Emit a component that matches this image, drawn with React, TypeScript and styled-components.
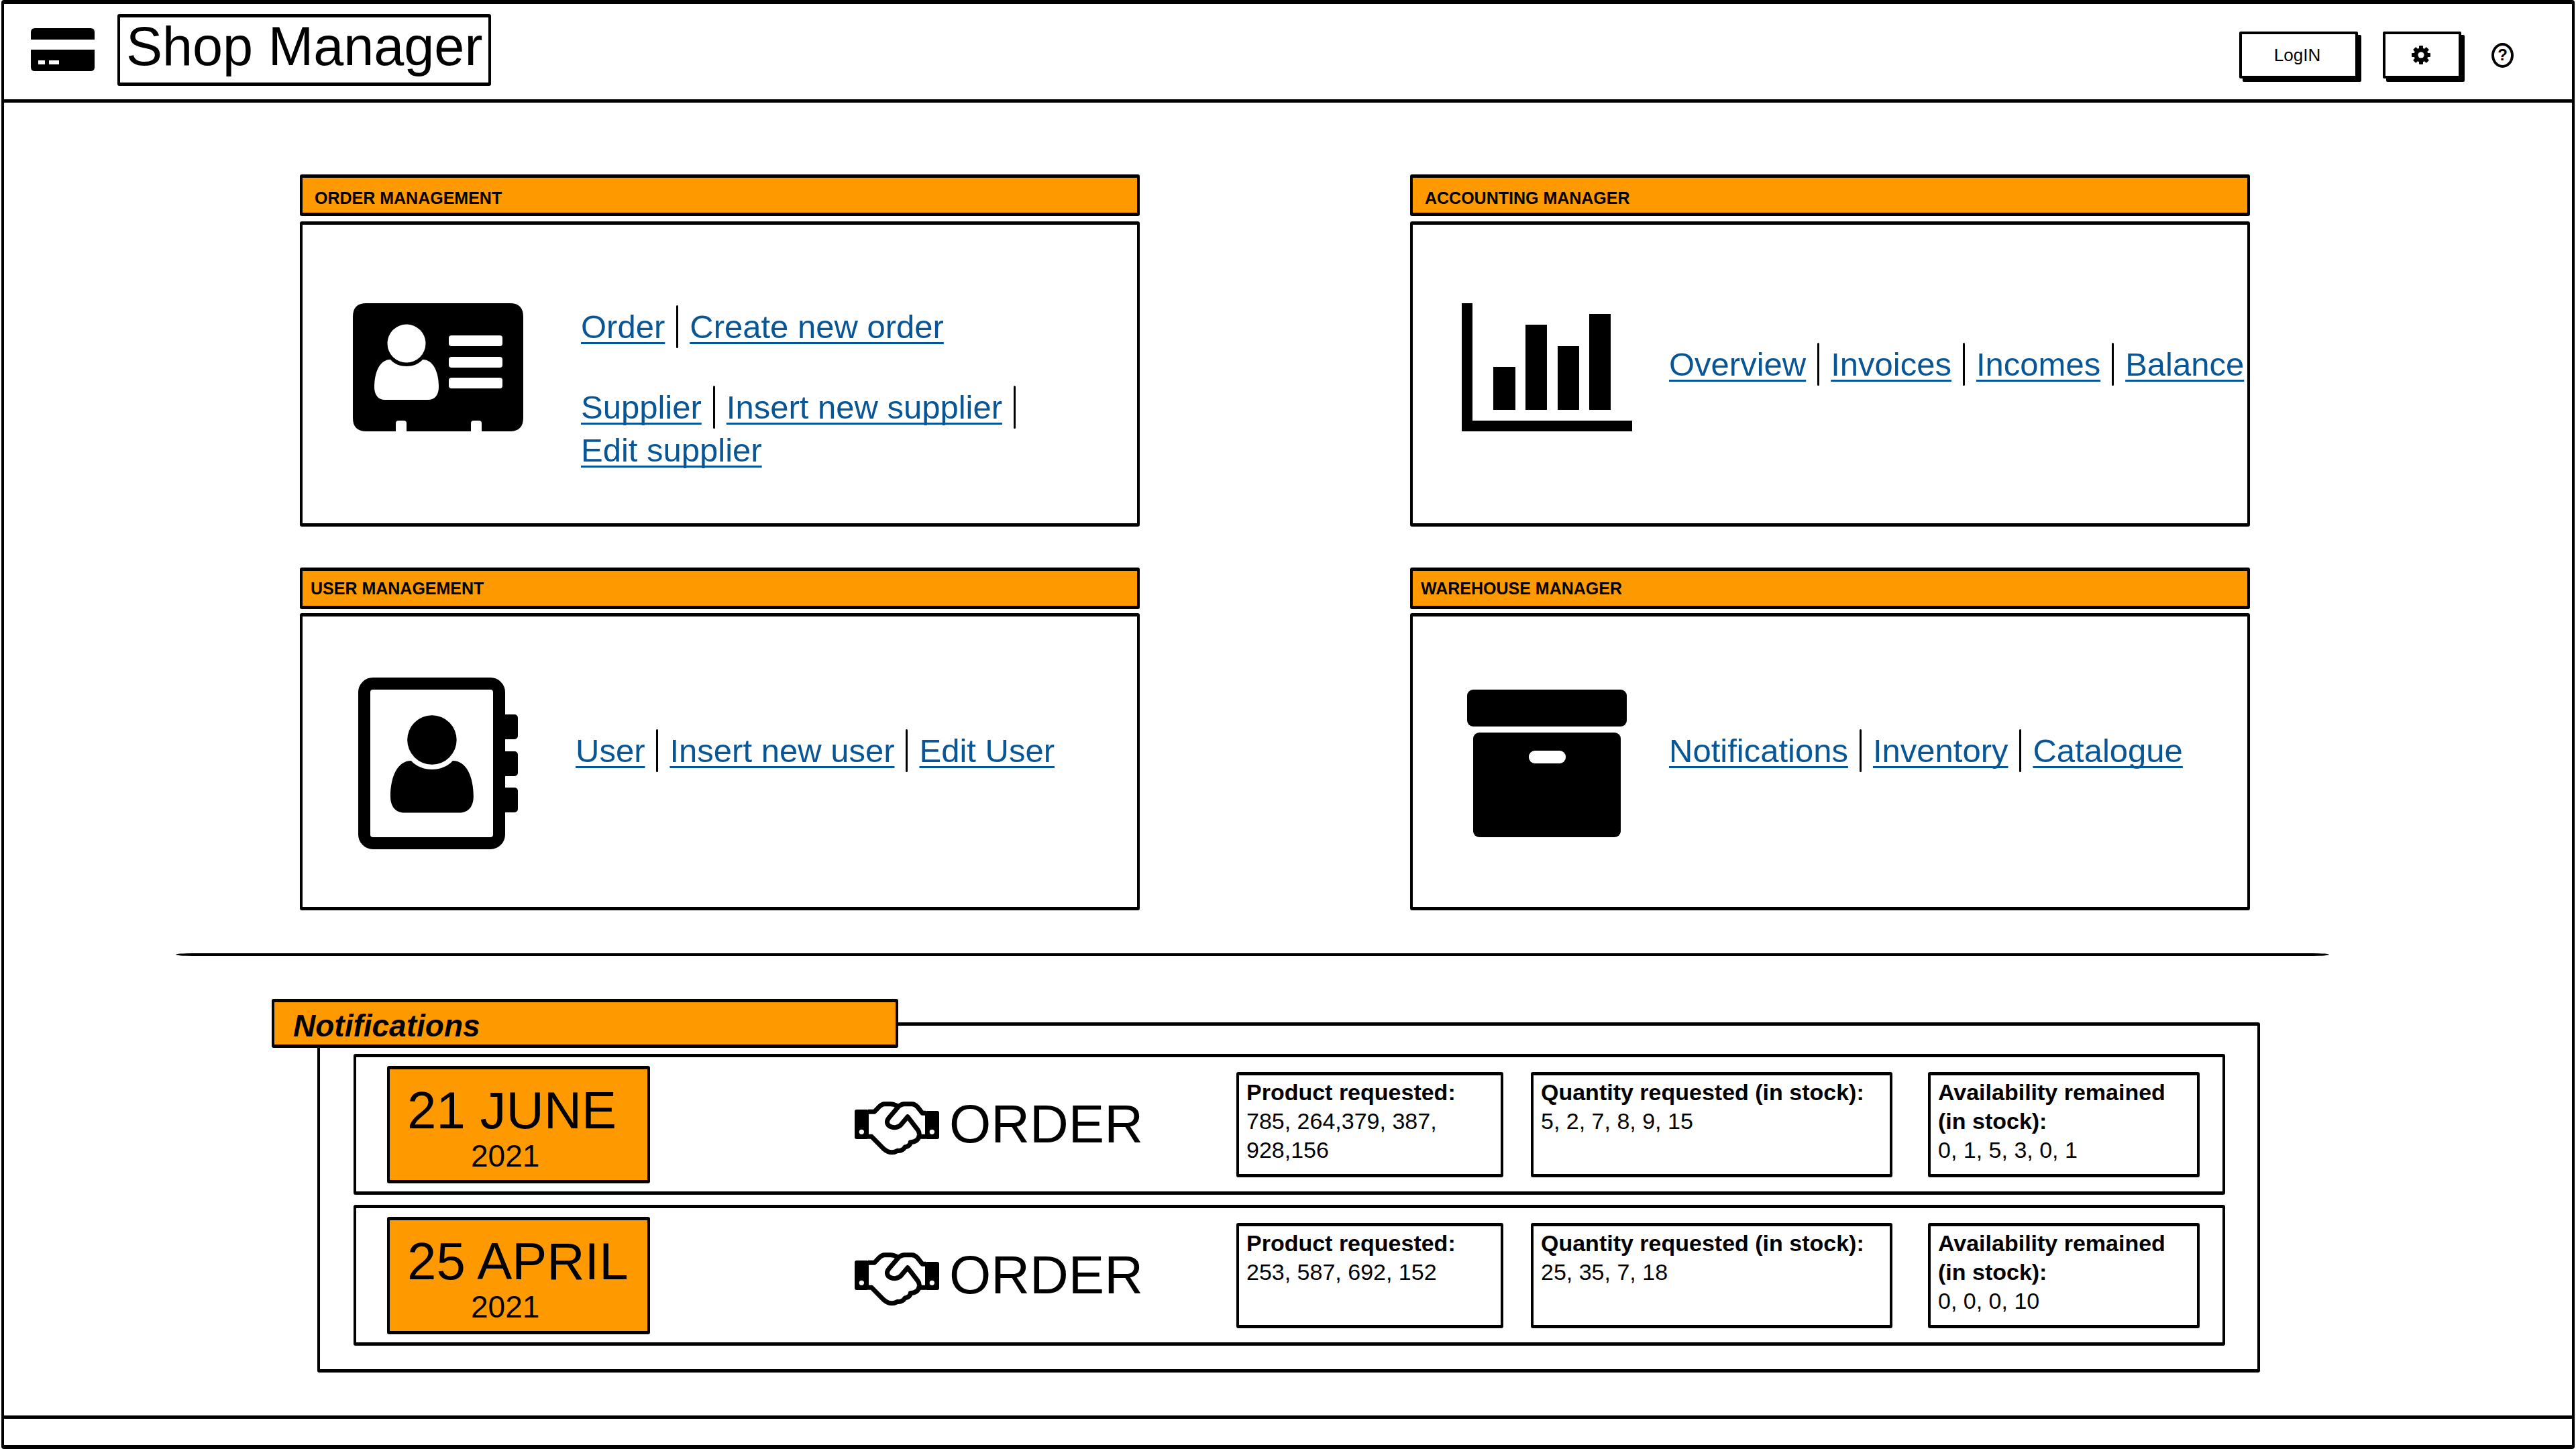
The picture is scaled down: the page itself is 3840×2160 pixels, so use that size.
import React from "react";
import styled, { createGlobalStyle } from "styled-components";

const INK = "#000";
const ORANGE = "#ff9900";
const LINK = "#085696";

const GlobalStyle = createGlobalStyle`
  *, *::before, *::after { box-sizing: border-box; }
  body {
    margin: 0;
    background: #fff;
    color: ${INK};
    font-family: "Liberation Sans", Arial, sans-serif;
  }
  h1, h2, p, dl, dd, ul { margin: 0; padding: 0; }
`;

const Frame = styled.div`
  display: flex;
  flex-direction: column;
  min-height: 100vh;
  margin: 0 2px;
  border: solid ${INK};
  border-width: 6px 4px;
  border-radius: 4px;
`;

const Box = styled.div`
  border: solid ${INK};
  border-width: 5px 4px;
  border-radius: 3px;
  background: #fff;
`;

/* Header */

const Header = styled.header`
  display: flex;
  align-items: center;
  height: 147px;
  padding: 0 87px 6px 40px;
  border-bottom: 5px solid ${INK};
`;

const Title = styled(Box).attrs({ as: "h1" })`
  margin-left: 34px;
  padding: 0 9px 11px;
  font-size: 81px;
  font-weight: 400;
  line-height: 86px;
  white-space: nowrap;
`;

const Actions = styled.div`
  display: flex;
  align-items: center;
  margin-left: auto;
  padding-top: 16px;
`;

const ActionButton = styled.button<{ $width: number }>`
  display: flex;
  align-items: center;
  justify-content: center;
  width: ${(p) => p.$width}px;
  height: 70px;
  margin-right: 37px;
  padding: 0 4px 0 0;
  border: 4px solid ${INK};
  border-radius: 2px;
  background: #fff;
  box-shadow: 5px 5px 0 ${INK};
  color: ${INK};
  font: 26px "Liberation Sans", Arial, sans-serif;
`;

const HelpButton = styled.button`
  width: 33px;
  height: 37px;
  margin-left: 8px;
  padding: 0;
  border: 4px solid ${INK};
  border-radius: 50%;
  background: #fff;
  color: ${INK};
  font: bold 24px/28px "Liberation Sans", Arial, sans-serif;
`;

/* Cards */

const Cards = styled.div`
  display: grid;
  grid-template-columns: 1fr 1fr;
  gap: 61px 403px;
  padding: 107px 480px 0 441px;
`;

const Card = styled.section<{ $gap: number }>`
  display: flex;
  flex-direction: column;
  gap: ${(p) => p.$gap}px;
`;

const CardTitle = styled(Box).attrs({ as: "h2" })<{ $pad: string }>`
  height: 62px;
  padding: ${(p) => p.$pad};
  background: ${ORANGE};
  font-size: 25px;
  line-height: 52px;
`;

const CardBody = styled(Box)<{ $height: number; $pad: string; $gap: number }>`
  display: flex;
  align-items: center;
  gap: ${(p) => p.$gap}px;
  min-height: ${(p) => p.$height}px;
  padding: ${(p) => p.$pad};
`;

const IconSlot = styled.div`
  display: flex;
  flex: none;
  justify-content: center;
  width: 254px;
`;

const LinkGroups = styled.nav<{ $lift: number }>`
  display: flex;
  flex: 1;
  flex-direction: column;
  gap: 56px;
  min-width: 0;
  margin-bottom: ${(p) => p.$lift}px;
`;

const LinkRow = styled.ul`
  display: flex;
  flex-wrap: wrap;
  list-style: none;
`;

const LinkItem = styled.li`
  display: flex;
  font-size: 49px;
  line-height: 64px;
  white-space: nowrap;

  &:not(:last-child)::after {
    content: "";
    width: 3px;
    margin: 0 17px;
    border-radius: 2px;
    background: ${INK};
  }
`;

const TextLink = styled.a`
  color: ${LINK};
  text-decoration: underline;
  text-decoration-thickness: 3px;
  text-decoration-skip-ink: none;
  text-underline-offset: 6px;
`;

const Divider = styled.hr`
  height: 4px;
  margin: 64px 362px 0 256px;
  border: 0;
  border-radius: 24px / 2px;
  background: ${INK};
`;

/* Notifications */

const Panel = styled(Box).attrs({ as: "section" })`
  position: relative;
  display: flex;
  flex-direction: column;
  gap: 15px;
  margin: 99px 465px 63px 467px;
  padding: 42px 48px 35px 50px;
`;

const PanelTitle = styled(Box).attrs({ as: "h2" })`
  position: absolute;
  top: -40px;
  left: -72px;
  width: 934px;
  height: 73px;
  padding: 4px 0 0 28px;
  background: ${ORANGE};
  font-size: 46px;
  font-style: italic;
  line-height: 62px;
`;

const Row = styled(Box).attrs({ as: "article" })`
  display: flex;
  align-items: center;
  min-height: 210px;
  padding: 0 34px 0 46px;
`;

const DateBox = styled(Box)`
  display: flex;
  flex-direction: column;
  width: 392px;
  height: 175px;
  padding: 16px 0 0 26px;
  background: ${ORANGE};
`;

const Day = styled.span`
  font-size: 78px;
  line-height: 90px;
  white-space: nowrap;
`;

const Year = styled.span`
  padding-left: 95px;
  font-size: 46px;
  line-height: 46px;
`;

const Kind = styled.div`
  display: flex;
  align-items: center;
  gap: 15px;
  margin-left: 305px;
  font-size: 80px;

  svg { margin-top: 12px; }
`;

const Stats = styled.dl`
  display: grid;
  grid-template-columns: 398px 539px 417px;
  gap: 41px;
  margin-left: auto;
`;

const Stat = styled(Box)`
  min-height: 157px;
  padding: 4px 11px;
  font-size: 34px;
  line-height: 43px;

  &:last-child { margin-left: 12px; }
  dt { font-weight: 700; }
`;

const Footer = styled.footer`
  height: 44px;
  margin-top: auto;
  border-top: 5px solid ${INK};
`;

/* Drawings */

const PaymentIcon = () => (
  <svg width="95" height="64" viewBox="0 0 95 64" aria-hidden="true">
    <path d="M6 0H89Q95 0 95 6V17H0V6Q0 0 6 0Z" />
    <path d="M0 32H95V58Q95 64 89 64H6Q0 64 0 58Z" />
    <path d="M11 48h10v6h-10zM27 48h15v6h-15z" fill="#fff" />
  </svg>
);

const GearIcon = () => (
  <svg width="28" height="28" viewBox="-14 -14 28 28" aria-hidden="true">
    {[0, 45, 90, 135].map((a) => (
      <rect key={a} x="-3" y="-14" width="6" height="28" rx="1" transform={`rotate(${a})`} />
    ))}
    <circle r="10.5" />
    <circle r="4.6" fill="#fff" />
  </svg>
);

const Person = ({ fill, transform }: { fill: string; transform: string }) => (
  <g fill={fill} transform={transform}>
    <circle cx="48" cy="-24" r="28.5" />
    <path d="M24 0C8 0 0 19 0 41C0 53 6 60 16 60H80C90 60 96 53 96 41C96 19 88 0 72 0C66 7 57 10 48 10C39 10 30 7 24 0Z" />
  </g>
);

const ContactCardIcon = () => (
  <svg width="254" height="191" viewBox="0 0 254 191" aria-hidden="true">
    <path d="M20 0H234Q254 0 254 20V171Q254 191 234 191H192V179Q192 175 188 175H180Q176 175 176 179V191H80V179Q80 175 76 175H68Q64 175 64 179V191H20Q0 191 0 171V20Q0 0 20 0Z" />
    <Person fill="#fff" transform="translate(32 84)" />
    <g fill="#fff">
      <rect x="143" y="48" width="80" height="16" rx="4" />
      <rect x="143" y="80" width="80" height="16" rx="4" />
      <rect x="143" y="111" width="80" height="16" rx="4" />
    </g>
  </svg>
);

const ChartIcon = () => (
  <svg width="254" height="191" viewBox="0 0 254 191" aria-hidden="true">
    <path d="M0 0H16V175H254V191H0ZM47 95H80V159H47ZM95 32H127V159H95ZM143 64H175V159H143ZM190 16H222V159H190Z" />
  </svg>
);

const AddressBookIcon = () => (
  <svg width="238" height="256" viewBox="0 0 238 256" aria-hidden="true">
    <rect x="9" y="9" width="201" height="238" rx="13" fill="#fff" stroke="#000" strokeWidth="18" />
    <rect x="205" y="55" width="33" height="37" rx="5" />
    <rect x="205" y="110" width="33" height="37" rx="5" />
    <rect x="205" y="164" width="33" height="37" rx="5" />
    <Person fill="#000" transform="translate(48 124) scale(1.29)" />
  </svg>
);

const ArchiveIcon = () => (
  <svg width="238" height="220" viewBox="0 0 238 220" aria-hidden="true">
    <rect width="238" height="55" rx="9" />
    <rect x="9" y="64" width="220" height="156" rx="9" />
    <rect x="92" y="91" width="55" height="19" rx="9" fill="#fff" />
  </svg>
);

const HandshakeIcon = () => (
  <svg width="126" height="80" viewBox="0 0 378 240" aria-hidden="true">
    <rect y="36" width="63" height="132" rx="9" />
    <rect x="315" y="42" width="63" height="126" rx="9" />
    <circle cx="31" cy="136" r="11" fill="#fff" />
    <circle cx="346" cy="136" r="11" fill="#fff" />
    <g fill="none" stroke="#000" strokeWidth="21" strokeLinejoin="round">
      <path d="M60 46H88L108 25Q121 11 134 11H160Q176 11 190 20" />
      <path d="M318 52H303L281 24Q270 11 256 11H222Q208 11 197 22L154 72Q139 90 150 105Q161 116 180 116Q196 116 208 103L237 68L283 128Q290 137 289 150Q286 180 250 182Q248 200 225 204Q214 222 192 220Q160 238 130 212L76 157H60" />
      <path d="M318 157H292" />
    </g>
  </svg>
);

/* Content */

const cards = [
  {
    title: "ORDER MANAGEMENT", icon: <ContactCardIcon />, row: 0,
    left: 75, gap: 86, lift: -62,
    groups: [["Order", "Create new order"], ["Supplier", "Insert new supplier", "Edit supplier"]],
  },
  {
    title: "ACCOUNTING MANAGER", icon: <ChartIcon />, row: 0,
    left: 73, gap: 55, lift: 10,
    groups: [["Overview", "Invoices", "Incomes", "Balance"]],
  },
  {
    title: "USER MANAGEMENT", icon: <AddressBookIcon />, row: 1,
    left: 75, gap: 78, lift: 38,
    groups: [["User", "Insert new user", "Edit User"]],
  },
  {
    title: "WAREHOUSE MANAGER", icon: <ArchiveIcon />, row: 1,
    left: 73, gap: 55, lift: 38,
    groups: [["Notifications", "Inventory", "Catalogue"]],
  },
];

const cardRows = [
  { gap: 8, height: 455, titlePad: "4px 0 0 18px", top: 0, bottom: 20 },
  { gap: 6, height: 443, titlePad: "0 0 0 12px", top: 4, bottom: 0 },
];

const notifications = [
  {
    day: "21 JUNE", year: "2021",
    products: "785, 264,379, 387, 928,156",
    quantities: "5, 2, 7, 8, 9, 15",
    remaining: "0, 1, 5, 3, 0, 1",
  },
  {
    day: "25 APRIL", year: "2021",
    products: "253, 587, 692, 152",
    quantities: "25, 35, 7, 18",
    remaining: "0, 0, 0, 10",
  },
];

export default function App() {
  return (
    <>
      <GlobalStyle />
      <Frame>
        <Header>
          <PaymentIcon />
          <Title>Shop Manager</Title>
          <Actions>
            <ActionButton type="button" $width={177}>LogIN</ActionButton>
            <ActionButton type="button" $width={117} aria-label="Settings">
              <GearIcon />
            </ActionButton>
            <HelpButton type="button">?</HelpButton>
          </Actions>
        </Header>

        <main>
          <Cards>
            {cards.map((card) => {
              const row = cardRows[card.row];
              return (
                <Card key={card.title} $gap={row.gap}>
                  <CardTitle $pad={row.titlePad}>{card.title}</CardTitle>
                  <CardBody
                    $height={row.height}
                    $gap={card.gap}
                    $pad={`${row.top}px 0 ${row.bottom}px ${card.left}px`}
                  >
                    <IconSlot>{card.icon}</IconSlot>
                    <LinkGroups $lift={card.lift}>
                      {card.groups.map((group) => (
                        <LinkRow key={group[0]}>
                          {group.map((label) => (
                            <LinkItem key={label}>
                              <TextLink href="#">{label}</TextLink>
                            </LinkItem>
                          ))}
                        </LinkRow>
                      ))}
                    </LinkGroups>
                  </CardBody>
                </Card>
              );
            })}
          </Cards>

          <Divider />

          <Panel>
            <PanelTitle>Notifications</PanelTitle>
            {notifications.map((n) => (
              <Row key={n.day}>
                <DateBox>
                  <Day>{n.day}</Day>
                  <Year>{n.year}</Year>
                </DateBox>
                <Kind>
                  <HandshakeIcon />
                  <span>ORDER</span>
                </Kind>
                <Stats>
                  <Stat>
                    <dt>Product requested:</dt>
                    <dd>{n.products}</dd>
                  </Stat>
                  <Stat>
                    <dt>Quantity requested (in stock):</dt>
                    <dd>{n.quantities}</dd>
                  </Stat>
                  <Stat>
                    <dt>Availability remained (in stock):</dt>
                    <dd>{n.remaining}</dd>
                  </Stat>
                </Stats>
              </Row>
            ))}
          </Panel>
        </main>

        <Footer />
      </Frame>
    </>
  );
}
